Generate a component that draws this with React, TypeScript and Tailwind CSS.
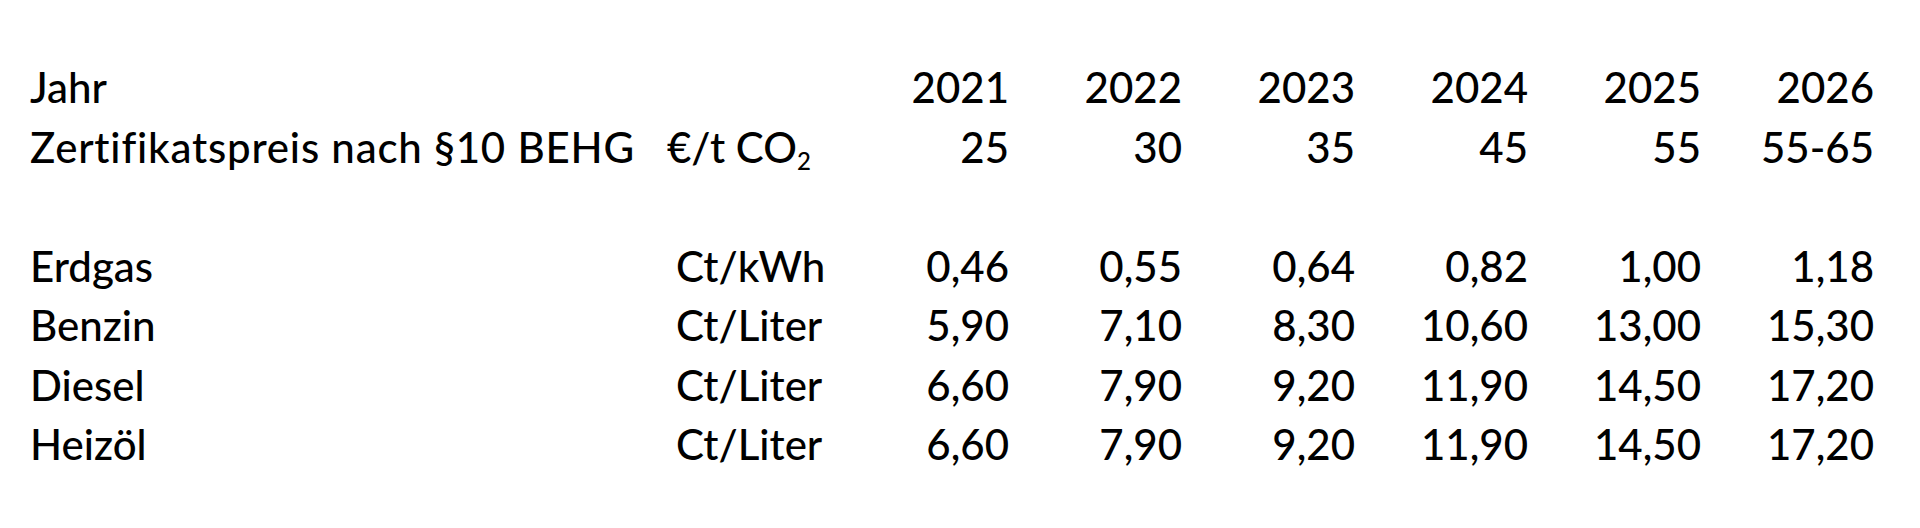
const years = ["2021", "2022", "2023", "2024", "2025", "2026"];

const prices = ["25", "30", "35", "45", "55", "55-65"];

const fuels: { name: string; unit: string; values: string[] }[] = [
  { name: "Erdgas", unit: "Ct/kWh", values: ["0,46", "0,55", "0,64", "0,82", "1,00", "1,18"] },
  { name: "Benzin", unit: "Ct/Liter", values: ["5,90", "7,10", "8,30", "10,60", "13,00", "15,30"] },
  { name: "Diesel", unit: "Ct/Liter", values: ["6,60", "7,90", "9,20", "11,90", "14,50", "17,20"] },
  { name: "Heizöl", unit: "Ct/Liter", values: ["6,60", "7,90", "9,20", "11,90", "14,50", "17,20"] },
];

function Row({
  label,
  unit,
  values,
  wide,
}: {
  label: string;
  unit?: React.ReactNode;
  values: string[];
  wide?: boolean;
}) {
  return (
    <>
      <div className={wide ? "whitespace-nowrap tracking-[0.8px]" : "whitespace-nowrap"}>{label}</div>
      <div className="whitespace-nowrap pl-[4px]">{unit}</div>
      {values.map((v, i) => (
        <div key={i} className="text-right whitespace-nowrap">
          {v}
        </div>
      ))}
    </>
  );
}

export default function App() {
  return (
    <div className="w-[1920px] h-[528px] bg-white text-black overflow-hidden">
      <div
        className="grid grid-cols-[642px_164px_repeat(6,173px)] auto-rows-[59.5px] pl-[30px] pt-[58px] text-[42px] font-medium leading-[59.5px]"
        style={{ fontFamily: "Lato, 'Open Sans', sans-serif" }}
      >
        <Row label="Jahr" values={years} />
        <Row
          label="Zertifikatspreis nach §10 BEHG"
          wide
          unit={
            <span className="-ml-[9px]">
              €/t CO<sub className="text-[24px] -bottom-[7px]">2</sub>
            </span>
          }
          values={prices}
        />
        <div className="col-span-8" />
        {fuels.map((f) => (
          <Row key={f.name} label={f.name} unit={f.unit} values={f.values} />
        ))}
      </div>
    </div>
  );
}
